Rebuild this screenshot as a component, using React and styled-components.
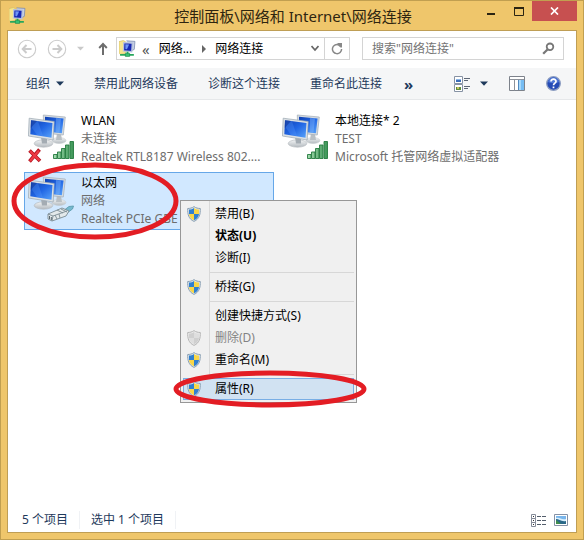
import React from 'react';
import styled, { createGlobalStyle, css } from 'styled-components';

const tools = ['禁用此网络设备', '诊断这个连接', '重命名此连接'];

const connections = [
  { name: 'WLAN', status: '未连接', device: 'Realtek RTL8187 Wireless 802....', kind: 'wifi', off: true },
  { name: '本地连接* 2', status: 'TEST', device: 'Microsoft 托管网络虚拟适配器', kind: 'wifi' },
  { name: '以太网', status: '网络', device: 'Realtek PCIe GBE', kind: 'cable', selected: true },
];

const menuGroups = [
  [
    { label: '禁用(B)', shield: true },
    { label: '状态(U)', bold: true },
    { label: '诊断(I)' },
  ],
  [{ label: '桥接(G)', shield: true }],
  [
    { label: '创建快捷方式(S)' },
    { label: '删除(D)', shield: true, disabled: true },
    { label: '重命名(M)', shield: true },
  ],
  [{ label: '属性(R)', shield: true, active: true }],
];

const FolderIcon = ({ size }) => (
  <svg width={size} height={size} viewBox="0 0 16 16" aria-hidden="true">
    <path d="M0 1.500l4-1 2 1v11l-5 1-1-1z" fill="#f6e58d" stroke="#d3bb62" strokeWidth=".6" />
    <path d="M7 .8l8 .5-.6 7.500-2 1" fill="#c5cfe4" stroke="#7587ad" strokeWidth=".7" />
    <path d="M4.500 2.500l8 .5-.5 8-7.800-.8z" fill="#1728b4" stroke="#b9c4dd" strokeWidth="1.200" />
    <path d="M6 4l3.500.2-2 4.500L6 8.500z" fill="#6f95f5" />
    <path d="M8 11v3M1 14h13" stroke="#27a85c" strokeWidth="1.800" />
    <path d="M6 12.500h4v3H6z" fill="#36c173" stroke="#168344" strokeWidth=".5" />
  </svg>
);

const Nav = ({ back }) => (
  <svg width="20" height="20" viewBox="0 0 20 20" fill="none" stroke="#cbcbcb" aria-hidden="true">
    <circle cx="10" cy="10" r="8.7" strokeWidth="1.1" />
    <path d={back ? 'M14.5 10H6M9.5 6L5.7 10l3.8 4' : 'M5.5 10H14M10.5 6l3.8 4-3.8 4'} strokeWidth="2" />
  </svg>
);

const Caret = ({ color = '#1e395b', width = 8 }) => (
  <svg width={width} height="5" viewBox="0 0 8 5" aria-hidden="true"><path d="M0 .5h8L4 4.7z" fill={color} /></svg>
);

const UpIcon = () => (
  <svg width="10" height="13" viewBox="0 0 10 13" fill="none" stroke="#6d6d6d" strokeWidth="2" aria-hidden="true">
    <path d="M5 13V2M1.2 6L5 2l3.8 4" />
  </svg>
);

const RefreshIcon = () => (
  <svg width="12" height="12" viewBox="0 0 12 12" aria-hidden="true">
    <path d="M10.6 6A4.6 4.6 0 1 1 7.500 1.700" fill="none" stroke="#888" strokeWidth="1.500" />
    <path d="M6.500 0H11v4.600H9.500L6.500 2z" fill="#888" />
  </svg>
);

const SearchIcon = () => (
  <svg width="13" height="13" viewBox="0 0 13 13" fill="none" stroke="#777" aria-hidden="true">
    <circle cx="8" cy="4.8" r="3.3" strokeWidth="1.8" />
    <path d="M5.5 7.5L1.2 11.7" strokeWidth="2.3" />
  </svg>
);

const ViewIcon = () => (
  <svg width="17" height="16" viewBox="0 0 17 16" aria-hidden="true">
    <path d="M.5.5h8v7h-8zM.5 8.500h8v7h-8z" fill="#fff" stroke="#8692a4" />
    <path d="M2 3h5v3H2z" fill="#3b6eb8" /><path d="M2 3h5v1H2z" fill="#8fb7e6" />
    <path d="M2 11h5v3H2z" fill="#5f8e3e" /><path d="M3 11h2v2H3z" fill="#c9c45c" />
    <path d="M10 2.500h6M10 4.500h4M10 10.500h6M10 12.500h4" stroke="#5c6675" />
  </svg>
);

const PaneIcon = () => (
  <svg width="16" height="15" viewBox="0 0 16 15" aria-hidden="true">
    <path d="M.5.5h15v14H.5z" fill="#fff" stroke="#7d828b" />
    <path d="M1 3.500h14M5.500 3.500v11" stroke="#8d929a" fill="none" />
    <path d="M9 4h6v10H9z" fill="#77bdf3" /><path d="M9 4h3v10H9z" fill="#a6d8fb" />
    <path d="M9.500 4v10" stroke="#5089bf" />
  </svg>
);

const HelpIcon = () => (
  <svg width="15" height="15" viewBox="0 0 15 15" aria-hidden="true">
    <circle cx="7.5" cy="7.5" r="6.8" fill="#254bb5" stroke="#8b9cc0" strokeWidth="1.3" />
    <path d="M2 6a5.600 5.600 0 0 1 11 0c-3 1.500-8 1.500-11 0z" fill="#4f78d7" />
    <path d="M5 5.500C5 2.300 10.200 2.600 10 5.500 9.900 7.200 7.600 7 7.500 9.200M7.500 10.500v1.700" fill="none" stroke="#fff" strokeWidth="1.7" />
  </svg>
);

const DetailsIcon = () => (
  <svg width="15" height="13" viewBox="0 0 15 13" fill="none" aria-hidden="true">
    <path d="M.5.5h4v4h-4zM.5 4.500h4v4h-4zM.5 8.500h4v4h-4z" stroke="#858b98" />
    <path d="M2 2.500h1M2 6.500h1M2 10.500h1" stroke="#333" />
    <path d="M6 2.500h4M11 2.500h4M6 6.500h4M11 6.500h4M6 10.500h4M11 10.500h4" stroke="#535d6b" />
  </svg>
);

const PictureIcon = () => (
  <svg width="14" height="12" viewBox="0 0 14 12" aria-hidden="true">
    <path d="M.5.5h13v11H.5z" fill="#fff" stroke="#8591a5" />
    <path d="M2 2h10v8H2z" fill="#79b6ec" />
    <path d="M2 4c4-1 5 2 10 1v3H2z" fill="#d8effc" />
    <path d="M2 5c3 0 5 3 10 2v3H2z" fill="#2a6888" /><path d="M2 6l5 4H2z" fill="#3f8d4b" />
  </svg>
);

const Shield = ({ gray }) => {
  const [blue, yellow, rim] = gray ? ['#cfcfcf', '#dedede', '#b5b5b5'] : ['#2f7fd0', '#f8d648', '#8ba0b4'];
  return (
    <svg width="14" height="16" viewBox="0 0 14 16" aria-hidden="true">
      <path d="M7 .6C5 2 3 2.500.7 2.500.5 8 1.500 13 7 15.400 12.500 13 13.500 8 13.300 2.500 11 2.500 9 2 7 .6z" fill={gray ? '#ececec' : '#dde6ec'} stroke={rim} />
      <path d="M7 2C5.400 3.100 4 3.500 2 3.600V8h5z" fill={blue} />
      <path d="M7 2c1.600 1.100 3 1.500 5 1.600V8H7z" fill={yellow} />
      <path d="M2 8c.4 2.900 2 5 5 6.300V8z" fill={yellow} />
      <path d="M12 8c-.4 2.900-2 5-5 6.300V8z" fill={blue} />
    </svg>
  );
};

const ConnectionIcon = ({ kind, off, id }) => (
  <svg width="48" height="50" viewBox="0 0 48 50" aria-hidden="true">
    <defs>
      <linearGradient id={`screen${id}`} x1="0" y1="0" x2="1" y2="1">
        <stop offset="0" stopColor="#0f3fb0" />
        <stop offset=".5" stopColor="#2166e4" />
        <stop offset="1" stopColor="#5aa4fa" />
      </linearGradient>
      <linearGradient id={`bar${id}`} x1="0" y1="0" x2="1" y2="0">
        <stop offset="0" stopColor="#a5dcb0" />
        <stop offset="1" stopColor="#3c9556" />
      </linearGradient>
      <linearGradient id={`base${id}`} x1="0" y1="0" x2="0" y2="1">
        <stop offset="0" stopColor="#f3f5f6" />
        <stop offset="1" stopColor="#b4babf" />
      </linearGradient>
    </defs>
    <ellipse cx="31" cy="26.500" rx="7" ry="3" fill={`url(#base${id})`} stroke="#c3c8cc" strokeWidth=".5" />
    <path d="M29 19l4 1 1 6h-6z" fill="#b9c0c5" />
    <path d="M15.300 1l22 2-2 18-19.500-2z" fill="#d5dbe0" stroke="#a3aeb7" strokeWidth=".7" />
    <path d="M17 2.800l18.600 1.700-1.700 14.700L17 17.400z" fill={`url(#screen${id})`} />
    <path d="M28 4l5 .4-1.500 14.400-4-.4z" fill="#9accff" opacity=".35" />
    <ellipse cx="15.500" cy="29.500" rx="9.300" ry="3.700" fill={`url(#base${id})`} stroke="#b0b6bb" strokeWidth=".6" />
    <path d="M13 23l6 1v5.500h-5z" fill="#a4acb3" />
    <path d="M1.200 4.200l25 3.300L25.200 26 .4 22z" fill="#dce1e5" stroke="#9ba7b1" strokeWidth=".7" />
    <path d="M3 6.200l21.500 2.900-1 14.700L2.300 20.300z" fill={`url(#screen${id})`} />
    <path d="M3 6.200l7 1 5 14.900-6-1L4 14z" fill="#5b9cff" opacity=".3" />
    <path d="M3 6.200l6 .8-6.300 7z" fill="#0c2f92" opacity=".5" />
    {off && <path d="M1.500 36.500L12 47M11.500 35.500L1.500 47.500" stroke="#b3141f" strokeWidth="3.6" />}
    {off && <path d="M2 37l9.500 9.500M11 36.500l-9 10.500" stroke="#ee3a44" strokeWidth="2.2" />}
    {kind === 'wifi' && (
      <path
        d="M25.500 40.500H29v4h-3.500zM29.500 38H33v6.500h-3.500zM33.500 34.500H37v10h-3.500zM37.500 31H41v13.500h-3.500zM42 27.500h3.500v17H42z"
        fill={`url(#bar${id})`} stroke="#257b40" strokeWidth=".9"
      />
    )}
    {kind === 'cable' && (
      <g stroke="#7b8b93" strokeWidth=".9">
        <path d="M35 35l6-4.500 4.500-.5-1 3-7 5z" fill="#75b9cf" stroke="#5c9cae" />
        <path d="M20 38l14-6 7 3-3 5-14 5-4-2z" fill="#e3e9eb" />
        <path d="M20 38l5 2-1 5M25 40l14-5M29 34l6 3M33 33l6 3M27 39l2 4M31 38l1 4" fill="none" />
        <path d="M21.500 40v3M23.300 41v3" stroke="#49575e" />
      </g>
    )}
  </svg>
);

const MenuEntry = ({ item }) => (
  <MenuButton role="menuitem" disabled={item.disabled} $bold={item.bold} $active={item.active}>
    <IconSlot>{item.shield && <Shield gray={item.disabled} />}</IconSlot>
    <span>{item.label}</span>
    {item.active && (
      <MenuRing viewBox="0 0 194 38" aria-hidden="true">
        <ellipse cx="97" cy="19" rx="94" ry="16" />
      </MenuRing>
    )}
  </MenuButton>
);

const ContextMenu = () => (
  <Menu role="menu">
    {menuGroups.map((group, i) => (
      <MenuGroup key={i} role="group">
        {group.map(item => <MenuEntry key={item.label} item={item} />)}
      </MenuGroup>
    ))}
  </Menu>
);

const App = () => (
  <>
    <GlobalStyle />
    <Frame>
      <TitleBar>
        <FolderIcon size={17} />
        <Title>控制面板\网络和 Internet\网络连接</Title>
        <WindowButtons>
          <WindowButton aria-label="最小化">
            <svg width="9" height="9"><path d="M0 6h8v2H0z" fill="#2b2412" /></svg>
          </WindowButton>
          <WindowButton aria-label="最大化">
            <svg width="10" height="9"><path d="M.5 1.5h9M.5 0v8.500h9V0M0 .5h10" fill="none" stroke="#2b2412" /></svg>
          </WindowButton>
          <WindowButton aria-label="关闭" $close>
            <svg width="9" height="8" viewBox="0 0 9 8"><path d="M1 .5l7 7M8 .5l-7 7" stroke="#fff" strokeWidth="1.7" /></svg>
          </WindowButton>
        </WindowButtons>
      </TitleBar>
      <Client>
        <AddressRow>
          <NavButtons>
            <PlainButton aria-label="后退"><Nav back /></PlainButton>
            <PlainButton aria-label="前进"><Nav /></PlainButton>
            <PlainButton aria-label="历史记录"><Caret color="#c9c9c9" width={7} /></PlainButton>
            <PlainButton aria-label="向上"><UpIcon /></PlainButton>
          </NavButtons>
          <AddressBox>
            <FolderIcon size={17} />
            <Crumbs aria-label="路径">
              <Chevrons>«</Chevrons>
              <Crumb href="#network">网络...</Crumb>
              <svg width="4" height="8" aria-hidden="true"><path d="M0 0l4 4-4 4z" fill="#666" /></svg>
              <Crumb href="#connections">网络连接</Crumb>
            </Crumbs>
            <PlainButton aria-label="地址列表">
              <svg width="8" height="7"><path d="M.5 1L4 5 7.5 1" fill="none" stroke="#666" strokeWidth="1.7" /></svg>
            </PlainButton>
            <Refresh aria-label="刷新"><RefreshIcon /></Refresh>
          </AddressBox>
          <SearchBox>
            <input type="text" aria-label="搜索" placeholder={'搜索"网络连接"'} />
            <SearchIcon />
          </SearchBox>
        </AddressRow>
        <Toolbar>
          <ToolButton>组织 <Caret /></ToolButton>
          {tools.map(t => <ToolButton key={t}>{t}</ToolButton>)}
          <MoreButton aria-label="更多">»</MoreButton>
          <ToolIcons>
            <ToolButton aria-label="更改视图"><ViewIcon /><Caret /></ToolButton>
            <ToolButton aria-label="预览窗格"><PaneIcon /></ToolButton>
            <ToolButton aria-label="帮助"><HelpIcon /></ToolButton>
          </ToolIcons>
        </Toolbar>
        <Tiles>
          {connections.map((c, i) => (
            <TileItem key={c.name}>
              <Tile $selected={c.selected}>
                <ConnectionIcon kind={c.kind} off={c.off} id={i} />
                <TileText>
                  <span>{c.name}</span>
                  <Detail>{c.status}</Detail>
                  <Detail>{c.device}</Detail>
                </TileText>
              </Tile>
              {c.selected && (
                <>
                  <TileRing viewBox="0 0 168 78" aria-hidden="true">
                    <ellipse cx="84" cy="39" rx="81" ry="36" />
                  </TileRing>
                  <ContextMenu />
                </>
              )}
            </TileItem>
          ))}
        </Tiles>
        <StatusBar>
          <StatusText>5 个项目</StatusText>
          <StatusText>选中 1 个项目</StatusText>
          <StatusIcons>
            <PlainButton aria-label="详细信息"><DetailsIcon /></PlainButton>
            <PlainButton aria-label="大图标"><PictureIcon /></PlainButton>
          </StatusIcons>
        </StatusBar>
      </Client>
    </Frame>
  </>
);

const GlobalStyle = createGlobalStyle`
  * {
    box-sizing: border-box;
  }

  body {
    margin: 0;
    font: 12px/18px "Noto Sans", "Noto Sans CJK SC", sans-serif;
    color: #000;
  }

  button, input {
    margin: 0;
    padding: 0;
    border: 0;
    background: none;
    font: inherit;
    color: inherit;
  }

  svg {
    display: block;
    flex-shrink: 0;
  }
`;

const Frame = styled.div`
  display: flex;
  flex-direction: column;
  min-height: 100vh;
  padding: 0 6px 6px;
  border: 1px solid #c19f50;
  background: #efc66b;
`;

const TitleBar = styled.header`
  display: grid;
  grid-template-columns: 1fr auto 1fr;
  height: 29px;
  align-items: center;
  padding-left: 2px;
`;

const Title = styled.h1`
  margin: 0;
  font-size: 15px;
  font-weight: normal;
  line-height: 28px;
  color: #2e2510;
`;

const WindowButtons = styled.div`
  display: flex;
  align-self: start;
  justify-content: flex-end;
`;

const WindowButton = styled.button`
  display: flex;
  align-items: center;
  justify-content: center;
  width: 27px;
  height: 20px;

  ${p => p.$close && css`
    width: 45px;
    background: #c75050;
  `}
`;

const Client = styled.main`
  display: flex;
  flex: 1;
  flex-direction: column;
  border: 1px solid #bf9e55;
  background: #fff;
`;

const AddressRow = styled.div`
  display: flex;
  gap: 12px;
  padding: 6px 12px 8px 9px;
`;

const PlainButton = styled.button`
  display: flex;
  align-items: center;
`;

const NavButtons = styled.div`
  display: flex;
  align-items: center;
  gap: 10px;
  margin-right: -4px;

  ${PlainButton}:nth-child(4) {
    margin-left: 4px;
  }
`;

const AddressBox = styled.div`
  display: flex;
  flex: 1;
  align-items: center;
  height: 23px;
  padding-left: 2px;
  border: 1px solid #d4d4d4;
`;

const Crumbs = styled.nav`
  display: flex;
  flex: 1;
  align-items: center;
  padding-left: 6px;
`;

const Chevrons = styled.span`
  font-size: 15px;
  color: #555;
`;

const Crumb = styled.a`
  padding: 0 10px 0 9px;
  color: #000;
  text-decoration: none;
`;

const Refresh = styled(PlainButton)`
  justify-content: center;
  align-self: stretch;
  width: 25px;
  margin-left: 5px;
  border-left: 1px solid #d4d4d4;
`;

const SearchBox = styled.label`
  display: flex;
  flex: 0 1 202px;
  align-items: center;
  min-width: 0;
  padding: 0 8px 0 9px;
  border: 1px solid #d4d4d4;

  input {
    flex: 1;
    width: 0;
    min-width: 0;
    outline: 0;
  }

  input::placeholder {
    color: #747474;
    opacity: 1;
  }
`;

const Toolbar = styled.div`
  display: flex;
  align-items: center;
  gap: 30px;
  height: 32px;
  padding: 0 15px 0 18px;
  border-bottom: 1px solid #e6e8ea;
  background: #f5f6f7;
  color: #1e395b;
`;

const ToolButton = styled.button`
  display: flex;
  align-items: center;
  gap: 6px;
  white-space: nowrap;
`;

const MoreButton = styled(ToolButton)`
  margin-left: -8px;
  font-size: 15px;
  font-weight: bold;
`;

const ToolIcons = styled.div`
  display: flex;
  align-items: center;
  gap: 21px;
  margin-left: auto;

  ${ToolButton} {
    gap: 9px;
  }
`;

const Tiles = styled.ul`
  display: flex;
  flex: 1;
  flex-wrap: wrap;
  align-content: flex-start;
  gap: 4px;
  margin: 0;
  padding: 10px 16px;
  list-style: none;
`;

const TileItem = styled.li`
  position: relative;
`;

const Tile = styled.button`
  display: flex;
  gap: 5px;
  width: 250px;
  height: 58px;
  padding: 1px 3px;
  border: 1px solid ${p => (p.$selected ? '#66a7e8' : 'transparent')};
  background: ${p => (p.$selected ? '#d1e8ff' : 'none')};
  text-align: left;

  svg {
    margin-top: 2px;
  }
`;

const TileText = styled.span`
  display: flex;
  flex-direction: column;
`;

const Detail = styled.span`
  white-space: nowrap;
  color: #6d6d6d;
`;

const ring = css`
  position: absolute;
  fill: none;
  stroke: #e31d24;
  stroke-width: 5px;
  pointer-events: none;
`;

const TileRing = styled.svg`
  ${ring}
  top: -10px;
  left: -13px;
  width: 168px;
`;

const MenuRing = styled.svg`
  ${ring}
  top: -8px;
  left: -10px;
  width: 194px;
`;

const Menu = styled.div`
  position: absolute;
  top: 28px;
  left: 156px;
  width: 177px;
  padding: 2px;
  border: 1px solid #979797;
  background: linear-gradient(90deg, transparent 28px, #d9d9d9 28px, #d9d9d9 29px, transparent 29px) #f0f0f0;
`;

const MenuGroup = styled.div`
  & + &::before {
    content: '';
    display: block;
    height: 1px;
    margin: 3px 0 3px 27px;
    background: #d7d7d7;
  }
`;

const MenuButton = styled.button`
  position: relative;
  display: flex;
  align-items: center;
  width: 100%;
  height: 22px;
  font-weight: ${p => (p.$bold ? 'bold' : 'normal')};

  &:disabled {
    color: #838383;
  }

  ${p => p.$active && css`
    background: #d1e2f2;
    box-shadow: inset 0 0 0 1px #78aee5;
  `}
`;

const IconSlot = styled.span`
  width: 32px;
  padding-left: 4px;
`;

const StatusBar = styled.footer`
  display: flex;
  align-items: center;
  height: 24px;
  padding: 0 8px 0 14px;
  color: #1e395b;
`;

const StatusText = styled.span`
  margin-right: 11px;
  padding-right: 11px;
  border-right: 1px solid #f0f2f5;
`;

const StatusIcons = styled.div`
  display: flex;
  gap: 8px;
  margin-left: auto;
`;

export default App;
